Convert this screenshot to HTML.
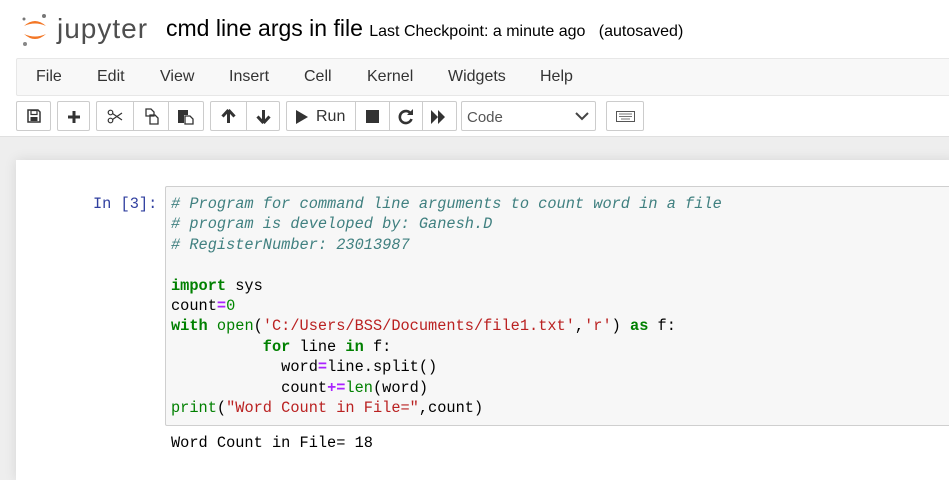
<!DOCTYPE html>
<html><head><style>
*{margin:0;padding:0;box-sizing:border-box}
body{width:949px;height:465px;overflow:hidden;background:#eee;font-family:"Liberation Sans",Arial,sans-serif;position:relative}
#hdr{position:absolute;left:0;top:0;width:949px;height:137px;background:#fff;border-bottom:1px solid #e0e0e0}
.abs{position:absolute}
#menu{position:absolute;left:16px;top:58px;width:940px;height:38px;background:#f8f8f8;border:1px solid #e7e7e7;border-radius:2px}
#menu span{position:absolute;top:9px;font-size:16px;color:#333}
.btn{position:absolute;top:101px;height:30px;border:1px solid #ccc;background:#fff;border-radius:2px}
.btn i{position:absolute;top:0;bottom:0;border-left:1px solid #ccc}
.btn svg{position:absolute}
#cell{position:absolute;left:16px;top:160px;width:940px;height:320px;background:#fff;box-shadow:0 0 12px rgba(0,0,0,.1)}
#inp{position:absolute;left:165px;top:186px;width:800px;height:240px;background:#f7f7f7;border:1px solid #cfcfcf;border-radius:2px}
pre{font-family:"Liberation Mono","DejaVu Sans Mono",monospace;font-size:15.3px;line-height:20.4px}
.c{color:#408080;font-style:italic}.k{color:#008000;font-weight:bold}.o{color:#aa22ff;font-weight:bold}.s{color:#ba2121}.b{color:#008000}.n{color:#080}
</style></head><body>
<div id="hdr">
<svg class="abs" style="left:20px;top:11px" width="30" height="36" viewBox="0 0 30 36">
<path d="M4 15 Q15 5 26 15 Q15 10 4 15Z" fill="#f37726"/>
<path d="M4 23 Q15 33 26 23 Q15 28 4 23Z" fill="#f37726"/>
<circle cx="24" cy="5" r="2" fill="#777"/><circle cx="4" cy="8" r="1.5" fill="#777"/><circle cx="5" cy="33" r="2" fill="#888"/>
</svg>
<div class="abs" style="left:57px;top:13px;font-size:28px;color:#4e4e4e;letter-spacing:1px">jupyter</div>
<div class="abs" style="left:166px;top:15px;font-size:23px;color:#000">cmd line args in file <span style="font-size:16px">Last Checkpoint: a minute ago</span> <span style="font-size:16px;margin-left:7px">(autosaved)</span></div>
<div id="menu">
<span style="left:19px">File</span><span style="left:80px">Edit</span><span style="left:143px">View</span><span style="left:212px">Insert</span><span style="left:287px">Cell</span><span style="left:350px">Kernel</span><span style="left:431px">Widgets</span><span style="left:523px">Help</span>
</div>
<div class="btn" style="left:16px;width:35px"><svg style="left:10px;top:7px" width="14" height="14" viewBox="0 0 14 14"><path d="M1 1h10l2 2v10H1z" fill="none" stroke="#333" stroke-width="1.5"/><rect x="4" y="1.5" width="6" height="4" fill="none" stroke="#333" stroke-width="1.2"/><rect x="3.5" y="8" width="7" height="4" fill="#333"/></svg></div>
<div class="btn" style="left:57px;width:33px"><svg style="left:9px;top:8px" width="14" height="14"><path d="M7 1v12M1 7h12" stroke="#333" stroke-width="3"/></svg></div>
<div class="btn" style="left:96px;width:108px"><i style="left:36px"></i><i style="left:71px"></i>
<svg style="left:10px;top:7px" width="16" height="15" viewBox="0 0 16 15"><circle cx="3.5" cy="3.5" r="2.3" fill="none" stroke="#333" stroke-width="1.2"/><circle cx="3.5" cy="11.5" r="2.3" fill="none" stroke="#333" stroke-width="1.2"/><path d="M5.5 4.5L15 11M5.5 10.5L15 4" stroke="#333" stroke-width="1.2"/></svg>
<svg style="left:45px;top:6px" width="17" height="17" viewBox="0 0 17 17"><path d="M4 1h5l3 3v4H4zM8 7h5l3 3v6H8z" fill="#fff" stroke="#333" stroke-width="1.3"/></svg>
<svg style="left:80px;top:6px" width="17" height="17" viewBox="0 0 17 17"><path d="M1 2h10v5H7v8H1z" fill="#333"/><path d="M8 8h5l3 3v5H8z" fill="#fff" stroke="#333" stroke-width="1.3"/></svg></div>
<div class="btn" style="left:210px;width:70px"><i style="left:35px"></i>
<svg style="left:10px;top:7px" width="15" height="15" viewBox="0 0 15 15"><path d="M7.5 1L1.5 7.5M7.5 1l6 6.5M7.5 2v12" stroke="#333" stroke-width="3" fill="none"/></svg>
<svg style="left:45px;top:7px" width="15" height="15" viewBox="0 0 15 15"><path d="M7.5 14L1.5 7.5M7.5 14l6-6.5M7.5 1v12" stroke="#333" stroke-width="3" fill="none"/></svg></div>
<div class="btn" style="left:286px;width:171px"><i style="left:68px"></i><i style="left:102px"></i><i style="left:135px"></i>
<svg style="left:8px;top:8px" width="13" height="14"><path d="M1 0L13 7L1 14z" fill="#333"/></svg>
<span class="abs" style="left:29px;top:6px;font-size:16px;color:#333">Run</span>
<div class="abs" style="left:79px;top:8px;width:13px;height:13px;background:#333"></div>
<svg style="left:111px;top:7px" width="16" height="16" viewBox="0 0 16 16"><path d="M13 5A6 6 0 1 0 13.5 10" stroke="#333" stroke-width="2.6" fill="none"/><path d="M9 6h6V0z" fill="#333"/></svg>
<svg style="left:144px;top:8px" width="15" height="14"><path d="M0 0L7 7L0 14zM7 0L14 7L7 14z" fill="#333"/></svg></div>
<div class="btn" style="left:461px;width:135px"><span class="abs" style="left:5px;top:7px;font-size:15px;color:#555">Code</span>
<svg style="left:113px;top:10px" width="14" height="9"><path d="M1 1 L7 7 L13 1" stroke="#444" stroke-width="2" fill="none"/></svg></div>
<div class="btn" style="left:606px;width:38px"><svg style="left:9px;top:9px" width="19" height="11"><rect x=".5" y=".5" width="18" height="10" fill="none" stroke="#555"/><path d="M3 3h13M3 5.5h13M5 8h9" stroke="#777"/></svg></div>
</div>
<div id="cell">
<pre class="abs" style="left:77px;top:34px;color:#303f9f">In [3]:</pre>
</div>
<div id="inp">
<pre class="abs" style="left:5px;top:7px;color:#000"><span class="c"># Program for command line arguments to count word in a file</span>
<span class="c"># program is developed by: Ganesh.D</span>
<span class="c"># RegisterNumber: 23013987</span>

<span class="k">import</span> sys
count<span class="o">=</span><span class="n">0</span>
<span class="k">with</span> <span class="b">open</span>(<span class="s">'C:/Users/BSS/Documents/file1.txt'</span>,<span class="s">'r'</span>) <span class="k">as</span> f:
          <span class="k">for</span> line <span class="k">in</span> f:
            word<span class="o">=</span>line.split()
            count<span class="o">+=</span><span class="b">len</span>(word)
<span class="b">print</span>(<span class="s">"Word Count in File="</span>,count)</pre>
</div>
<pre class="abs" style="left:171px;top:433px;color:#000">Word Count in File= 18</pre>
</body></html>
